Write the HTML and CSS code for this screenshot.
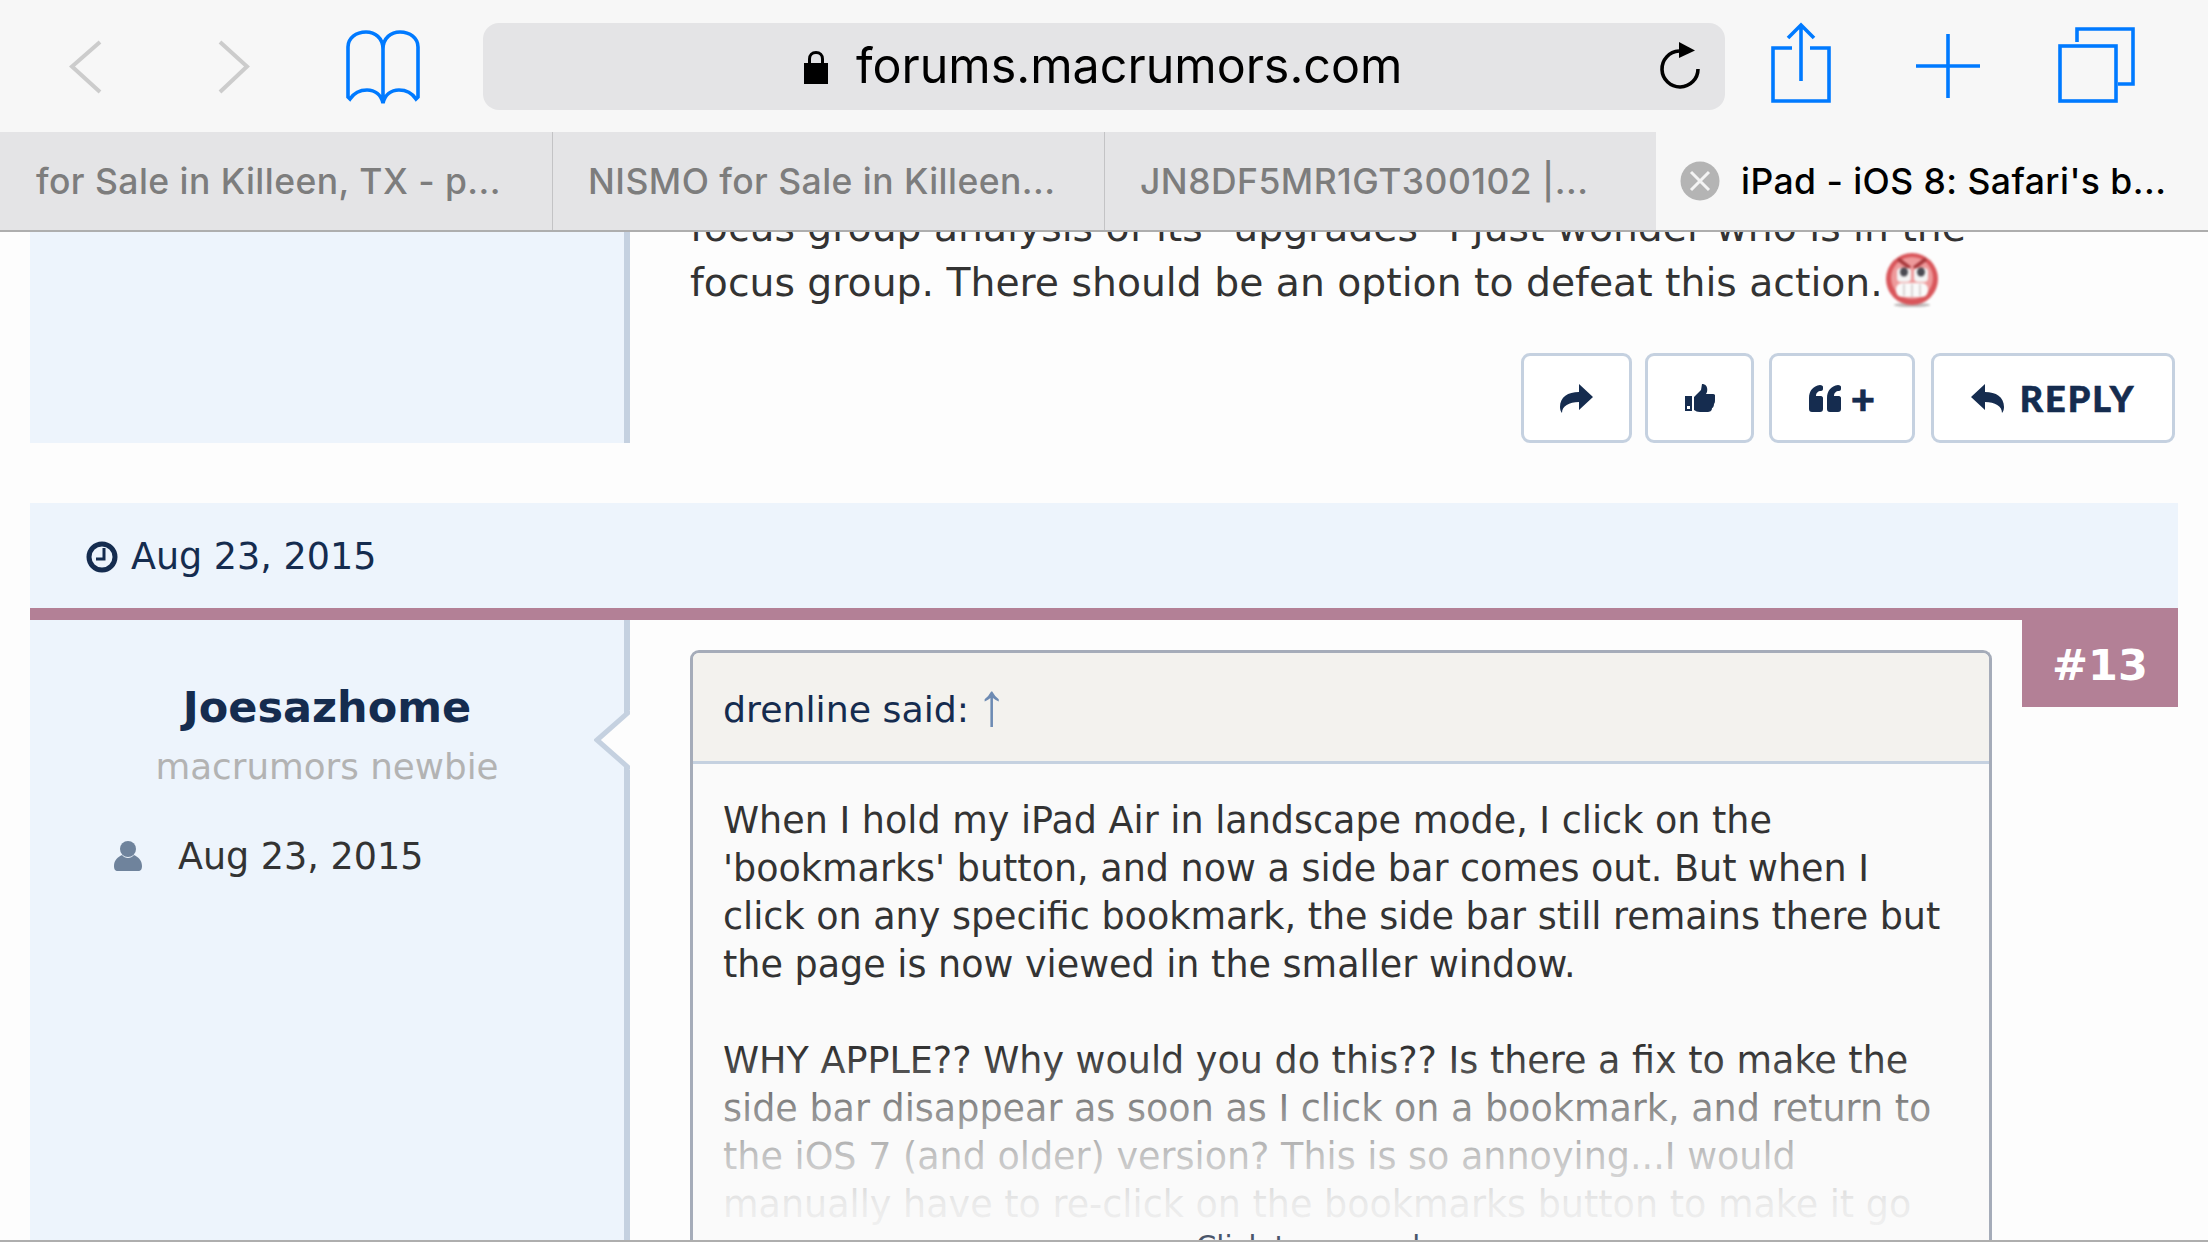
FILE: index.html
```html
<!DOCTYPE html>
<html lang="en">
<head>
<meta charset="utf-8">
<title>iPad - iOS 8: Safari's bookmarks</title>
<link rel="stylesheet" href="styles.css">
</head>
<body>
<div class="screen">
  <header class="chrome">
    <div class="toolbar">
      <svg class="ic ic-back" viewBox="0 0 32 56"><path d="M30 3 2 27.500 30 53" class="st-grey"/></svg>
      <svg class="ic ic-forward" viewBox="0 0 32 56"><path d="M2 3 29 27.500 2 53" class="st-grey"/></svg>
      <svg class="ic ic-book" viewBox="0 0 76 76"><path class="st-blue" d="M38 19C38 8 30 2 21 2 11 2 3 8 3 17V67L5 69C9 63 15 60 22 60 30 60 36 65 38 73 40 65 46 60 54 60 61 60 67 63 71 69L73 67V17C73 8 65 2 55 2 46 2 38 8 38 19V73"/></svg>
      <div class="url">
        <svg class="ic-lock" viewBox="0 0 24 33"><path d="M5.500 14V8C5.500 4 8 1.500 12 1.500S18.500 4 18.500 8V14" fill="none" stroke="#000" stroke-width="3"/><rect x="0" y="12" width="24" height="21"/></svg>
        <span class="url-text">forums.macrumors.com</span>
        <svg class="ic-reload" viewBox="0 0 44 50"><path d="M39 27A18 18 0 1 1 20 9" fill="none" stroke="#000" stroke-width="3.600"/><path d="M20 0 36 8.500 20 16Z"/></svg>
      </div>
      <svg class="ic ic-share" viewBox="0 0 60 82"><path class="st-blue" d="M21 26H2V79H58V26H39M30 59V3M17 16 30 3 43 16"/></svg>
      <svg class="ic ic-plus" viewBox="0 0 64 64"><path class="st-blue" d="M32 0V64M0 32H64"/></svg>
      <svg class="ic ic-tabs" viewBox="0 0 78 76"><path class="st-blue" d="M19 15V2H75V57H60"/><rect class="st-blue" x="2" y="19" width="56" height="55"/></svg>
    </div>
    <nav class="tabs">
      <div class="tab">for Sale in Killeen, TX - p...</div>
      <div class="tab tab-next">NISMO for Sale in Killeen...</div>
      <div class="tab tab-next">JN8DF5MR1GT300102 |...</div>
      <div class="tab tab-active">
        <svg class="ic-close" viewBox="0 0 40 40"><circle cx="20" cy="20" r="19.500" fill="#b4b4b4"/><path d="M11 11 29 29M29 11 11 29" stroke="#f4f4f4" stroke-width="3" fill="none"/></svg>
        <span>iPad - iOS 8: Safari's b...</span>
      </div>
    </nav>
  </header>

  <main class="page">
    <article class="post-prev">
      <aside class="side"></aside>
      <div class="prev-body">
        <p class="text prev-text">focus group analysis of its "upgrades" I just wonder who is in the<br>focus group. There should be an option to defeat this action.<svg class="smiley" viewBox="0 0 54 54"><ellipse cx="27" cy="52" rx="18" ry="2" fill="#bdb7b7"/><circle cx="27" cy="26" r="26" fill="#d9565b"/><circle cx="27" cy="25" r="21" fill="#ee9a9b"/><path d="M13 6 25 15M41 6 29 15" stroke="#a8393d" stroke-width="3.500"/><rect x="12" y="15" width="14" height="14" rx="4" fill="#f4f4f4"/><rect x="29" y="15" width="14" height="14" rx="4" fill="#f4f4f4"/><ellipse cx="19" cy="19" rx="4" ry="4.500" fill="#4a4a52"/><ellipse cx="36" cy="19" rx="4" ry="4.500" fill="#4a4a52"/><rect x="11" y="30" width="32" height="14" rx="6" fill="#fafafa"/><path d="M19 31V43M27 31V44M35 31V43" stroke="#cfc9c9" stroke-width="1.500"/></svg></p>
        <div class="actions">
          <button class="btn btn-share"><svg class="bi bi-arrow" viewBox="0 0 33 29"><path d="M33 13 19 0V8C8 8 0 13 0 23 0 26 1 28 2 29 2 22 9 18 19 18V26Z"/></svg></button>
          <button class="btn btn-like"><svg class="bi bi-thumb" viewBox="0 0 30 28"><path d="M0 12H7V27H0Z"/><path d="M9 13 16 6 17 0C21 0 23 3 22 8L21 10H28C31 10 31 14 30 15 30 17 30 19 29 20 29 22 28 24 27 24 27 27 25 28 22 28H15C12 28 11 27 9 26Z"/><rect x="2" y="22" width="3" height="3" fill="#fff"/></svg></button>
          <button class="btn btn-quote"><svg class="bi bi-quote" viewBox="0 0 32 27"><path d="M0 13C0 6 4 1 11 0 13 0 14 1 14 2V4C14 5 13 6 12 6 9 6 7 8 7 11H12C13 11 14 12 14 13V24C14 26 13 27 11 27H3C1 27 0 26 0 24ZM18 13C18 6 22 1 29 0 31 0 32 1 32 2V4C32 5 31 6 30 6 27 6 25 8 25 11H30C31 11 32 12 32 13V24C32 26 31 27 29 27H21C19 27 18 26 18 24Z"/></svg><span class="plus">+</span></button>
          <button class="btn btn-reply"><svg class="bi bi-arrow" viewBox="0 0 33 29"><path d="M0 13 14 0V8C25 8 33 13 33 23 33 26 32 28 31 29 31 22 24 18 14 18V26Z"/></svg><span>REPLY</span></button>
        </div>
      </div>
    </article>

    <div class="datebar">
      <svg class="ic-clock" viewBox="0 0 32 32"><circle cx="16" cy="16" r="13" fill="none" stroke="#152c4f" stroke-width="5"/><path d="M18 7V18H10" fill="none" stroke="#152c4f" stroke-width="3"/></svg>
      <span>Aug 23, 2015</span>
    </div>

    <article class="post">
      <span class="badge">#13</span>
      <aside class="side side-user">
        <svg class="notch" viewBox="0 0 36 60"><path d="M36 0 2 30 36 60Z" fill="#fdfdfd"/><path d="M36 1 3 30 36 59" fill="none" stroke="#c5d1e0" stroke-width="5"/></svg>
        <h3 class="username">Joesazhome</h3>
        <div class="usertitle">macrumors newbie</div>
        <div class="joined">
          <svg class="ic-person" viewBox="0 0 28 30"><circle cx="14" cy="8" r="8" fill="#6f839c"/><path d="M0 25C0 19 4 16 8 14 11 18 17 18 20 14 24 16 28 19 28 25 28 28 27 30 24 30H4C1 30 0 28 0 25Z" fill="#6f839c"/></svg>
          <span>Aug 23, 2015</span>
        </div>
      </aside>
      <div class="post-body">
        <section class="quote">
          <div class="quote-head">drenline said: <span class="up">↑</span></div>
          <div class="quote-text">
            <p class="text">When I hold my iPad Air in landscape mode, I click on the<br>'bookmarks' button, and now a side bar comes out. But when I<br>click on any specific bookmark, the side bar still remains there but<br>the page is now viewed in the smaller window.<br><br>WHY APPLE?? Why would you do this?? Is there a fix to make the<br>side bar disappear as soon as I click on a bookmark, and return to<br>the iOS 7 (and older) version? This is so annoying...I would<br>manually have to re-click on the bookmarks button to make it go</p>
            <div class="fade"></div>
            <div class="expand">Click to expand...</div>
          </div>
        </section>
      </div>
    </article>
  </main>
</div>
</body>
</html>
```

FILE: styles.css
```css
* { box-sizing: border-box; }
html, body { margin: 0; padding: 0; background: #fdfdfd; }
.screen {
  width: 2208px; height: 1242px; overflow: hidden;
  display: flex; flex-direction: column;
  border-bottom: 2px solid #aeaeae;
  font-family: "DejaVu Sans", sans-serif; color: #333;
}
.chrome { flex: none; position: relative; z-index: 5; background: #f7f7f7; }
.toolbar { height: 132px; display: flex; align-items: center; padding-left: 70px; }
.ic { display: block; flex: none; overflow: visible; }
.st-grey { fill: none; stroke: #cccccc; stroke-width: 4; }
.st-blue { fill: none; stroke: #007aff; stroke-width: 3.600; }
.ic-back { width: 32px; height: 56px; margin-top: 2px; }
.ic-forward { width: 32px; height: 56px; margin-left: 116px; margin-top: 2px; }
.ic-book { width: 76px; height: 76px; margin-left: 95px; margin-top: 3px; }
.url {
  width: 1242px; height: 87px; margin-left: 62px; flex: none;
  background: #e4e4e6; border-radius: 16px;
  display: flex; align-items: center; padding: 0 22px 0 321px;
  font-family: Inter, sans-serif; color: #000;
}
.ic-lock { width: 24px; height: 33px; margin-top: 2px; flex: none; }
.url-text { font-size: 48.400px; margin: -2px 0 0 28px; white-space: nowrap; }
.ic-reload { width: 44px; height: 50px; margin: 1px 0 0 auto; flex: none; }
.ic-share { width: 60px; height: 82px; margin-left: 46px; margin-top: -6px; }
.ic-plus { width: 64px; height: 64px; margin-left: 85px; }
.ic-tabs { width: 78px; height: 76px; margin-left: 78px; margin-top: -2px; }
.tabs { height: 98px; display: flex; font-family: Inter, sans-serif; font-weight: 500; font-size: 35.500px; letter-spacing: .45px; color: #7d7d7d; background: #e4e4e6; }
.tab { width: 552px; display: flex; align-items: center; padding-left: 36px; white-space: nowrap; flex: none; }
.tab-next { border-left: 1px solid #c3c3c5; padding-left: 35px; }
.tab-active { flex: 1; background: #f7f7f7; color: #000; padding-left: 24px; }
.ic-close { width: 40px; height: 40px; margin-right: 21px; flex: none; }

.page { flex: 1; min-height: 0; padding: 0 30px; background: #fdfdfd; border-top: 2px solid #aeaeae; }
.text { margin: 0; font-size: 36.500px; line-height: 48px; color: #333; }
.post-prev { display: grid; grid-template-columns: 600px 1fr; height: 211px; }
.side { background: #edf4fc; border-right: 6px solid #c5d1e0; position: relative; }
.prev-body { padding-left: 60px; min-width: 0; overflow: hidden; }
.prev-text { margin-top: -29px; height: 100px; line-height: 50px; white-space: nowrap; font-size: 39.300px; }
.smiley { width: 54px; height: 54px; vertical-align: -11px; margin-left: 2px; filter: blur(1px); }
.actions { display: flex; justify-content: flex-end; margin-top: 50px; padding-right: 3px; }
.btn {
  height: 90px; background: #fff; border: 3px solid #c5d1e0; border-radius: 9px;
  display: flex; align-items: center; justify-content: center; color: #152c4f; padding: 0;
  font-family: Lato, sans-serif; font-weight: 900; font-size: 36px; -webkit-text-stroke: .6px #152c4f;
}
.btn svg { fill: #152c4f; }
.btn-share { width: 111px; }
.btn-like { width: 109px; margin-left: 13px; }
.btn-quote { width: 146px; margin-left: 15px; }
.btn-reply { width: 244px; margin-left: 16px; letter-spacing: 2px; }
.bi-arrow { width: 33px; height: 29px; }
.bi-thumb { width: 30px; height: 28px; }
.bi-quote { width: 32px; height: 27px; }
.plus { margin-left: 10px; font-size: 42px; line-height: 1; }
.btn-reply span { margin-left: 16px; }
.datebar {
  margin-top: 60px; height: 105px; background: #edf4fc; display: flex; align-items: center;
  padding: 2px 0 0 56px; color: #152c4f; font-size: 36.500px;
}
.ic-clock { width: 32px; height: 32px; margin-right: 13px; flex: none; }
.post { position: relative; border-top: 12px solid #b38096; display: grid; grid-template-columns: 600px 1fr; height: 640px; }
.badge {
  position: absolute; top: -12px; right: 0; width: 156px; height: 99px; background: #b38096;
  color: #fff; font-weight: 700; font-size: 43px; display: flex; align-items: center; justify-content: center; padding-top: 14px;
}
.side-user { text-align: center; padding-top: 62px; }
.notch { position: absolute; right: -6px; top: 90px; width: 36px; height: 60px; }
.username { margin: 0; font-size: 43px; line-height: 50px; font-weight: 700; color: #152c4f; }
.usertitle { font-size: 35.700px; line-height: 40px; color: #b3b3b3; margin-top: 15px; }
.joined { display: flex; align-items: center; text-align: left; margin-top: 48px; padding-left: 84px; font-size: 36.500px; line-height: 44px; color: #333; }
.ic-person { width: 28px; height: 30px; margin-right: 36px; flex: none; margin-top: -2px; }
.post-body { padding: 30px 0 0 60px; }
.quote { width: 1302px; border: 3px solid #a5acb9; border-bottom: 0; border-radius: 9px 9px 0 0; background: #fafafa; height: 700px; }
.quote-head { height: 111px; background: #f3f2ee; border-bottom: 3px solid #c5d1e0; border-radius: 6px 6px 0 0; padding: 27px 0 0 30px; font-size: 36.300px; line-height: 60px; color: #152c4f; }
.up { color: #6d8bb3; font-family: "Liberation Sans", sans-serif; font-size: 60px; line-height: 0; vertical-align: -3px; margin-left: -4px; }
.quote-text { position: relative; padding: 33px 30px 0; }
.fade { position: absolute; left: 0; right: 0; top: 288px; height: 190px; background: linear-gradient(to bottom, rgba(250,250,250,0) 0, rgba(250,250,250,.45) 56px, rgba(250,250,250,.72) 104px, rgba(250,250,250,.92) 152px, rgba(250,250,250,.97) 190px); }
.expand { position: absolute; left: 0; right: 38px; top: 458px; text-align: center; font-size: 29px; line-height: 48px; color: #4a566a; }
```
